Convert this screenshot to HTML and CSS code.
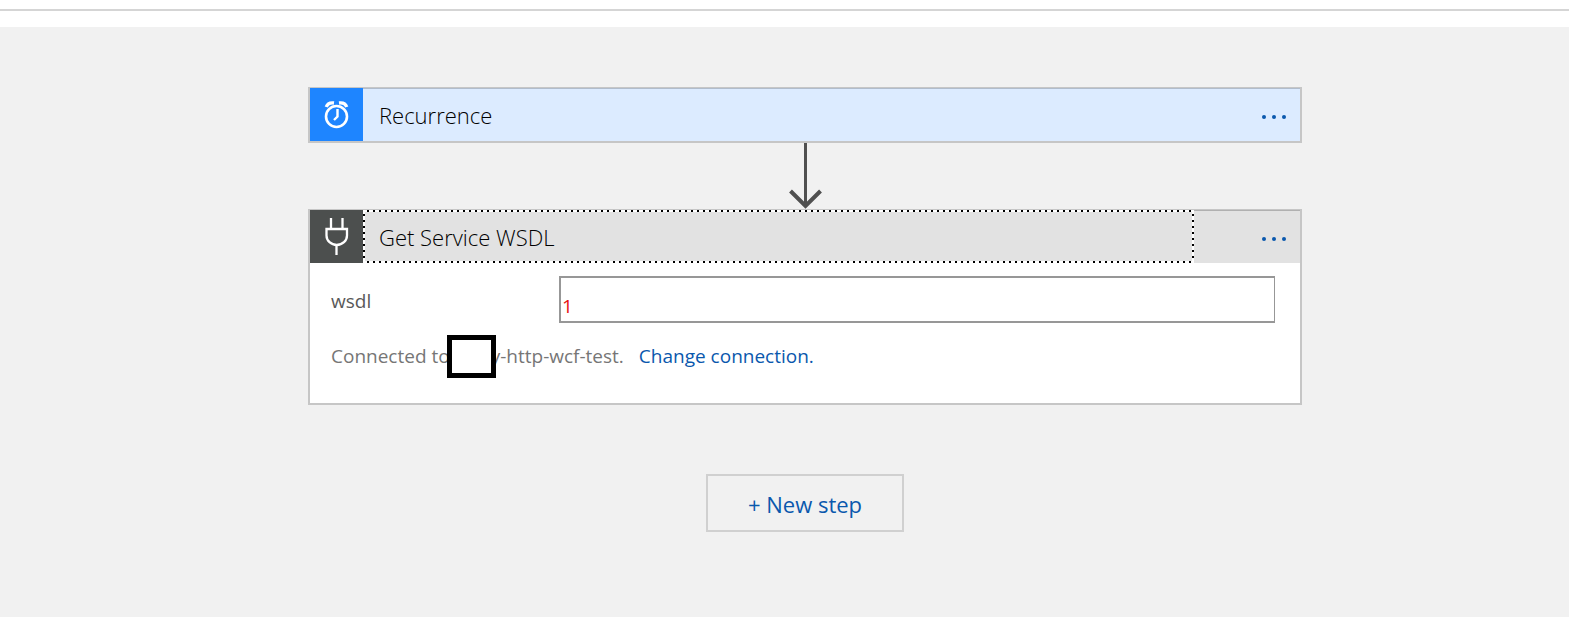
FILE: index.html
```html
<!DOCTYPE html>
<html lang="en">
<head>
<meta charset="utf-8">
<title>Logic app designer</title>
<link rel="stylesheet" href="styles.css">
</head>
<body>
<header class="topbar"></header>
<main class="canvas">
  <section class="card card-trigger">
    <div class="card-head">
      <span class="card-icon">
        <svg width="53" height="53" viewBox="0 0 53 53" fill="none" stroke="#fff" aria-hidden="true">
          <circle cx="26.500" cy="28.500" r="10.500" stroke-width="2.600"/>
          <path d="M27.500 21v7.500l-3.500 3.500" stroke-width="2.400"/>
          <path d="M16.300 19c1-3 4-4.500 7.700-4M36.700 19c-1-3-4-4.500-7.700-4" stroke-width="3.400"/>
        </svg>
      </span>
      <button class="card-title" type="button">Recurrence</button>
      <button class="menu" type="button" aria-label="Recurrence menu"><i class="dot"></i><i class="dot"></i><i class="dot"></i></button>
    </div>
  </section>
  <svg class="arrow" width="34" height="66" viewBox="0 0 34 66" fill="none" stroke="#505050" stroke-width="3" aria-hidden="true">
    <path d="M17.500 0v63"/>
    <path d="M2.500 48l15 15L32.500 48" stroke-width="4"/>
  </svg>
  <section class="card card-action">
    <div class="card-head">
      <span class="card-icon">
        <svg width="53" height="53" viewBox="0 0 53 53" fill="none" stroke="#fff" stroke-width="2.300" aria-hidden="true">
          <path d="M21 8v11M32.500 8v11M26.500 35v10"/>
          <path d="M16.500 19h20.500v6.500a10.250 9.500 0 0 1-20.500 0z"/>
        </svg>
      </span>
      <button class="card-title focused" type="button">Get Service WSDL</button>
      <button class="menu" type="button" aria-label="Get Service WSDL menu"><i class="dot"></i><i class="dot"></i><i class="dot"></i></button>
    </div>
    <div class="card-body">
      <div class="field">
        <label for="wsdl">wsdl</label>
        <input id="wsdl" type="text" value="1">
      </div>
      <p class="connection">
        <span>Connected to</span><span class="redacted"></span><span>y-http-wcf-test.</span>
        <a href="#">Change connection.</a>
      </p>
    </div>
  </section>
  <button class="new-step" type="button">+ New step</button>
</main>
</body>
</html>
```
FILE: styles.css
```css
* { box-sizing: border-box; }

body {
  display: flex;
  flex-direction: column;
  min-height: 100vh;
  margin: 0;
  background: #f1f1f1;
  font-family: "Segoe UI", "Open Sans", "Noto Sans", sans-serif;
  font-size: 19px;
}

button, input { font: inherit; }

button {
  padding: 0;
  border: 0;
  background: none;
  cursor: pointer;
}

.topbar {
  padding-top: 9px;
  height: 27px;
  background: #fff;
}

.topbar::before {
  content: "";
  display: block;
  height: 2px;
  background: #d5d5d5;
}

.canvas {
  display: flex;
  flex: 1;
  flex-direction: column;
  align-items: center;
  padding: 60px 0 60px 41px;
}

.card {
  width: 100%;
  max-width: 994px;
  border: 2px solid #c6c6c6;
  border-top-width: 1px;
  background: #fff;
}

.card-head {
  display: flex;
  height: 53px;
}

.card-trigger .card-head {
  background: #dcebff;
  box-shadow: inset 0 1px #b0bccc;
}

.card-action .card-head {
  background: #e2e2e2;
  box-shadow: inset 0 1px #b0b0b0;
}

.card-icon { width: 53px; }
.card-icon svg { display: block; }
.card-trigger .card-icon { background: #1e85ff; }
.card-action .card-icon { background: #4c4f4e; }

.card-title {
  flex: 1;
  padding: 0 16px;
  color: #000;
  font-size: 22px;
  font-weight: 300;
  text-align: left;
}

.focused {
  outline: none;
  background:
    repeating-linear-gradient(90deg, #fff 0 4px, #000 4px 6px) top / 100% 2px no-repeat,
    repeating-linear-gradient(90deg, #fff 0 4px, #000 4px 6px) bottom / 100% 2px no-repeat,
    repeating-linear-gradient(#fff 0 4px, #000 4px 6px) left / 2px 100% no-repeat,
    repeating-linear-gradient(#fff 0 4px, #000 4px 6px) right / 2px 100% no-repeat;
}

.menu {
  display: flex;
  align-items: center;
  justify-content: flex-end;
  gap: 6px;
  width: 106px;
  padding: 4px 14px 0 0;
}

.dot {
  width: 4px;
  height: 4px;
  border-radius: 2px;
  background: #0a58ad;
}

.arrow { display: block; }

.card-body { padding: 13px 25px 33px 21px; }

.field {
  display: flex;
  align-items: center;
}

.field label {
  width: 228px;
  padding-top: 2px;
  color: #595959;
}

.field input {
  flex: 1;
  min-width: 0;
  height: 47px;
  padding: 12px 1px 0;
  border: 2px solid #979797;
  border-right-width: 1px;
  outline: none;
  background: #fff;
  color: #e81010;
}

.connection {
  display: flex;
  align-items: center;
  height: 28px;
  margin: 19px 0 0;
  color: #767676;
  line-height: 28px;
  white-space: nowrap;
}

.redacted {
  z-index: 1;
  width: 49px;
  height: 43px;
  margin: 0 -5px 0 -3px;
  border: 5px solid #000;
  background: #fff;
}

.connection a {
  margin-left: 15px;
  color: #0a58ad;
  text-decoration: none;
}

.new-step {
  width: 198px;
  height: 58px;
  margin-top: 69px;
  padding-top: 2px;
  border: 2px solid #d0d0d0;
  color: #0a58ad;
  font-size: 22px;
}
```
